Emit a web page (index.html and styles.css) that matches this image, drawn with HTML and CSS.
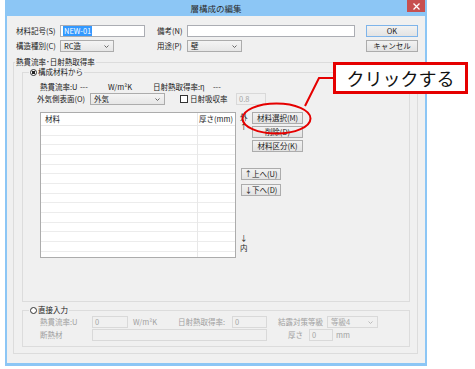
FILE: index.html
```html
<!DOCTYPE html>
<html lang="ja">
<head>
    <meta charset="UTF-8">
    <meta name="viewport" content="width=device-width, initial-scale=1.0">
    <title>層構成の編集</title>
    <link rel="stylesheet" href="styles.css">
</head>
<body>
    <div class="window">
        <div class="titlebar">
            <span class="title">層構成の編集</span>
            <span class="close">
                <svg width="7" height="7" viewBox="0 0 7 7"><path d="M0.5 0.5L6.5 6.5M6.5 0.5L0.5 6.5" stroke="#fff" stroke-width="1.3"/></svg>
            </span>
        </div>

        <div class="client">
            <!-- Header fields -->
            <div class="head-grid">
                <label>材料記号(S)</label>
                <div class="textbox w-code"><span class="selected">NEW-01</span></div>
                <label>備考(N)</label>
                <div class="textbox w-note"></div>
                <button class="btn btn-default">OK</button>

                <label>構造種別(C)</label>
                <div class="combo w-struct">
                    <span>RC造</span>
                    <svg class="chev" viewBox="0 0 5 3"><path d="M0.5 0.5L2.5 2.5L4.5 0.5" fill="none" stroke="#666"/></svg>
                </div>
                <label>用途(P)</label>
                <div class="combo w-use">
                    <span>壁</span>
                    <svg class="chev" viewBox="0 0 5 3"><path d="M0.5 0.5L2.5 2.5L4.5 0.5" fill="none" stroke="#666"/></svg>
                </div>
                <button class="btn">キャンセル</button>
            </div>

            <!-- U value / solar gain -->
            <fieldset class="group group-outer">
                <legend>熱貫流率･日射熱取得率</legend>

                <fieldset class="group group-inner">
                    <legend><span class="radio on"></span>構成材料から</legend>
                    <div class="materials">
                        <div class="info-row">
                            <span class="w40">熱貫流率:U</span>
                            <span class="w28">---</span>
                            <span class="w45">W/m²K</span>
                            <span class="w60">日射熱取得率:η</span>
                            <span>---</span>
                        </div>

                        <div class="surface-row">
                            <span class="w53">外気側表面(O)</span>
                            <div class="combo w-surface">
                                <span>外気</span>
                                <svg class="chev" viewBox="0 0 5 3"><path d="M0.5 0.5L2.5 2.5L4.5 0.5" fill="none" stroke="#666"/></svg>
                            </div>
                            <span class="checkbox"></span>
                            <span class="w46">日射吸収率</span>
                            <div class="textbox off w-absorb">0.8</div>
                        </div>

                        <div class="layer-area">
                            <div class="layer-list">
                                <div class="list-head">
                                    <span class="col-name">材料</span>
                                    <span class="col-thick">厚さ(mm)</span>
                                </div>
                                <div class="list-body">
                                    <span class="col-name"></span>
                                    <span></span>
                                </div>
                            </div>

                            <div class="side">
                                <div class="side-top">
                                    <div class="side-arrows">
                                        <span>外</span>
                                        <span>↑</span>
                                    </div>
                                    <div class="side-buttons">
                                        <button class="btn">材料選択(M)</button>
                                        <button class="btn">削除(D)</button>
                                        <button class="btn">材料区分(K)</button>
                                    </div>
                                </div>
                                <div class="move-buttons">
                                    <button class="btn">↑上へ(U)</button>
                                    <button class="btn">↓下へ(D)</button>
                                </div>
                                <div class="side-bottom">
                                    <span>↓</span>
                                    <span>内</span>
                                </div>
                            </div>
                        </div>
                    </div>
                </fieldset>

                <fieldset class="group group-inner group-direct">
                    <legend><span class="radio"></span>直接入力</legend>
                    <div class="direct">
                        <span>熱貫流率:U</span>
                        <div class="textbox off w36">0</div>
                        <span class="pl5">W/m²K</span>
                        <span>日射熱取得率:</span>
                        <div class="textbox off w35">0</div>
                        <span class="pl11">結露対策等級</span>
                        <div class="combo off w51">
                            <span>等級4</span>
                            <svg class="chev" viewBox="0 0 5 3"><path d="M0.5 0.5L2.5 2.5L4.5 0.5" fill="none" stroke="#bbb"/></svg>
                        </div>

                        <span>断熱材</span>
                        <div class="textbox off span-wide"></div>
                        <div class="thick-cell">
                            <span class="ml21">厚さ</span>
                            <div class="textbox off w24">0</div>
                            <span class="ml3">mm</span>
                        </div>
                    </div>
                </fieldset>
            </fieldset>
        </div>
    </div>

    <!-- Annotation -->
    <div class="callout">クリックする</div>
    <svg class="marks" width="475" height="369" viewBox="0 0 475 369">
        <ellipse cx="276.5" cy="118.5" rx="34" ry="15" fill="none" stroke="#e50000" stroke-width="2"/>
        <path d="M305 106 L319 78 L334 78" fill="none" stroke="#e50000" stroke-width="2"/>
    </svg>
</body>
</html>
```

FILE: styles.css
```css
* {
    margin: 0;
    padding: 0;
    box-sizing: border-box;
}

body {
    background-color: #fff;
    font-family: "Noto Sans CJK JP", "Noto Sans", sans-serif;
    font-size: 7.5px;
    line-height: 10px;
    color: #1a1a1a;
    width: 475px;
    height: 369px;
    position: relative;
    overflow: hidden;
}

/* Window frame */
.window {
    margin-left: 5px;
    width: 422px;
    height: 366px;
    background-color: #8cc6f5;
    padding: 0 2px 3px;
    display: flex;
    flex-direction: column;
}

.titlebar {
    height: 16px;
    display: grid;
    grid-template-columns: 1fr auto 1fr;
    align-items: center;
}

.title {
    grid-column: 2;
    font-size: 8.5px;
    color: #2b2b2b;
}

.close {
    grid-column: 3;
    justify-self: end;
    align-self: start;
    width: 18px;
    height: 12px;
    background-color: #c75050;
    display: flex;
    align-items: center;
    justify-content: center;
}

.client {
    flex: 1;
    background-color: #f0f0f0;
    padding: 9px 7px 0 6px;
    white-space: nowrap;
}

/* Header fields */
.head-grid {
    margin-left: 3px;
    display: grid;
    grid-template-columns: 44px 97px 30px 179px 52px;
    grid-auto-rows: 12px;
    row-gap: 3px;
    align-items: center;
}

.textbox {
    height: 12px;
    border: 1px solid #abadb3;
    background-color: #fff;
    padding: 0 2px;
    line-height: 10px;
    display: flex;
    align-items: center;
}

.textbox.off {
    background-color: #f0f0f0;
    border-color: #d9d9d9;
    color: #a6a6a6;
}

.selected {
    background-color: #3399ff;
    color: #fff;
    padding: 0 1px;
}

.combo {
    height: 12px;
    border: 1px solid #acacac;
    background: linear-gradient(#f4f4f4, #e6e6e6);
    padding: 0 4px 0 3px;
    display: flex;
    align-items: center;
    justify-content: space-between;
}

.combo.off {
    background: #f0f0f0;
    border-color: #d9d9d9;
    color: #a6a6a6;
}

.chev {
    width: 5px;
    height: 3px;
}

.w-code { width: 85px; }
.w-note { width: 168px; }
.w-struct { width: 54px; }
.w-use { width: 55px; }
.w-surface { width: 75px; }
.w-absorb { width: 30px; }

.btn {
    font: inherit;
    color: #1a1a1a;
    height: 12px;
    border: 1px solid #acacac;
    background: linear-gradient(#f2f2f2, #e3e3e3);
    display: flex;
    align-items: center;
    justify-content: center;
    white-space: nowrap;
}

.btn-default {
    border-color: #7eb4ea;
}

/* Group boxes */
.group {
    border: 1px solid #dcdcdc;
    min-inline-size: 0;
}

.group legend {
    line-height: 10px;
    padding: 0 1px;
}

.group-outer {
    margin-top: 5px;
    padding: 0 0 6px;
}

.group-outer > legend {
    margin-left: 1px;
}

.group-inner {
    margin: 0 7px 0 8px;
}

.group-inner > legend {
    margin-left: 6px;
    color: #1a1a1a;
}

.group-direct {
    margin-top: 3px;
}

.radio {
    display: inline-block;
    width: 7px;
    height: 7px;
    border: 1px solid #333;
    border-radius: 50%;
    background-color: #fff;
    vertical-align: -1px;
    margin-right: 1px;
}

.radio.on {
    background: radial-gradient(circle, #222 0 1.5px, #fff 2px);
}

.checkbox {
    width: 8px;
    height: 8px;
    border: 1px solid #333;
    background-color: #fff;
    margin: 0 2px 0 15px;
    flex-shrink: 0;
}

/* Material layers */
.materials {
    padding: 5px 0 43px 17px;
}

.info-row {
    display: flex;
    height: 10px;
}

.info-row span,
.surface-row > span {
    flex-shrink: 0;
}

.w40 { width: 40px; }
.w28 { width: 28px; }
.w45 { width: 45px; }
.w60 { width: 60px; }
.w53 { width: 53px; }
.w46 { width: 46px; }

.surface-row {
    display: flex;
    align-items: center;
    height: 12px;
    margin: 1px 0 0 -3px;
}

.layer-area {
    display: flex;
    margin-top: 7px;
}

.layer-list {
    width: 196px;
    height: 146px;
    border: 1px solid #acacac;
    background-color: #fff;
    display: flex;
    flex-direction: column;
}

.list-head {
    height: 13px;
    display: grid;
    grid-template-columns: 157px 1fr;
    border-bottom: 1px solid #e8e8e8;
    line-height: 12px;
}

.list-head .col-name {
    padding-left: 4px;
}

.col-name {
    border-right: 1px solid #e8e8e8;
}

.col-thick {
    padding-left: 1px;
}

.list-body {
    flex: 1;
    display: grid;
    grid-template-columns: 157px 1fr;
    background: repeating-linear-gradient(to bottom, transparent 0 8.67px, #ececec 8.67px 9.67px);
}

.side {
    margin-left: 4px;
    width: 64px;
    display: flex;
    flex-direction: column;
}

.side-top {
    display: flex;
}

.side-arrows {
    width: 12px;
    display: flex;
    flex-direction: column;
}

.side-buttons {
    width: 51px;
    display: flex;
    flex-direction: column;
    gap: 2px;
}

.move-buttons {
    margin: 16px 0 0 1px;
    width: 40px;
    display: flex;
    flex-direction: column;
    gap: 4px;
}

.side-bottom {
    margin-top: auto;
    padding-bottom: 5px;
    display: flex;
    flex-direction: column;
}

/* Direct input */
.direct {
    padding: 1px 0 5px 17px;
    display: grid;
    grid-template-columns: 52px 36px 50px 54px 35px 60px 51px;
    grid-auto-rows: 12px;
    row-gap: 1px;
    align-items: center;
    color: #a0a0a0;
}

.w36 { width: 36px; }
.w35 { width: 35px; }
.w51 { width: 51px; }
.w24 { width: 24px; }
.pl5 { padding-left: 5px; }
.pl11 { padding-left: 11px; }
.ml21 { margin-left: 21px; }
.ml3 { margin-left: 3px; }

.span-wide {
    grid-column: 2 / 6;
}

.thick-cell {
    grid-column: 6 / 8;
    display: flex;
    align-items: center;
}

.thick-cell .textbox {
    margin-left: 6px;
}

/* Annotation */
.callout {
    position: absolute;
    left: 333px;
    top: 62px;
    width: 135px;
    height: 32px;
    border: 3px solid #e50000;
    background-color: #fff;
    font-size: 18px;
    line-height: 26px;
    text-align: center;
    color: #111;
}

.marks {
    position: absolute;
    left: 0;
    top: 0;
    pointer-events: none;
}
```
